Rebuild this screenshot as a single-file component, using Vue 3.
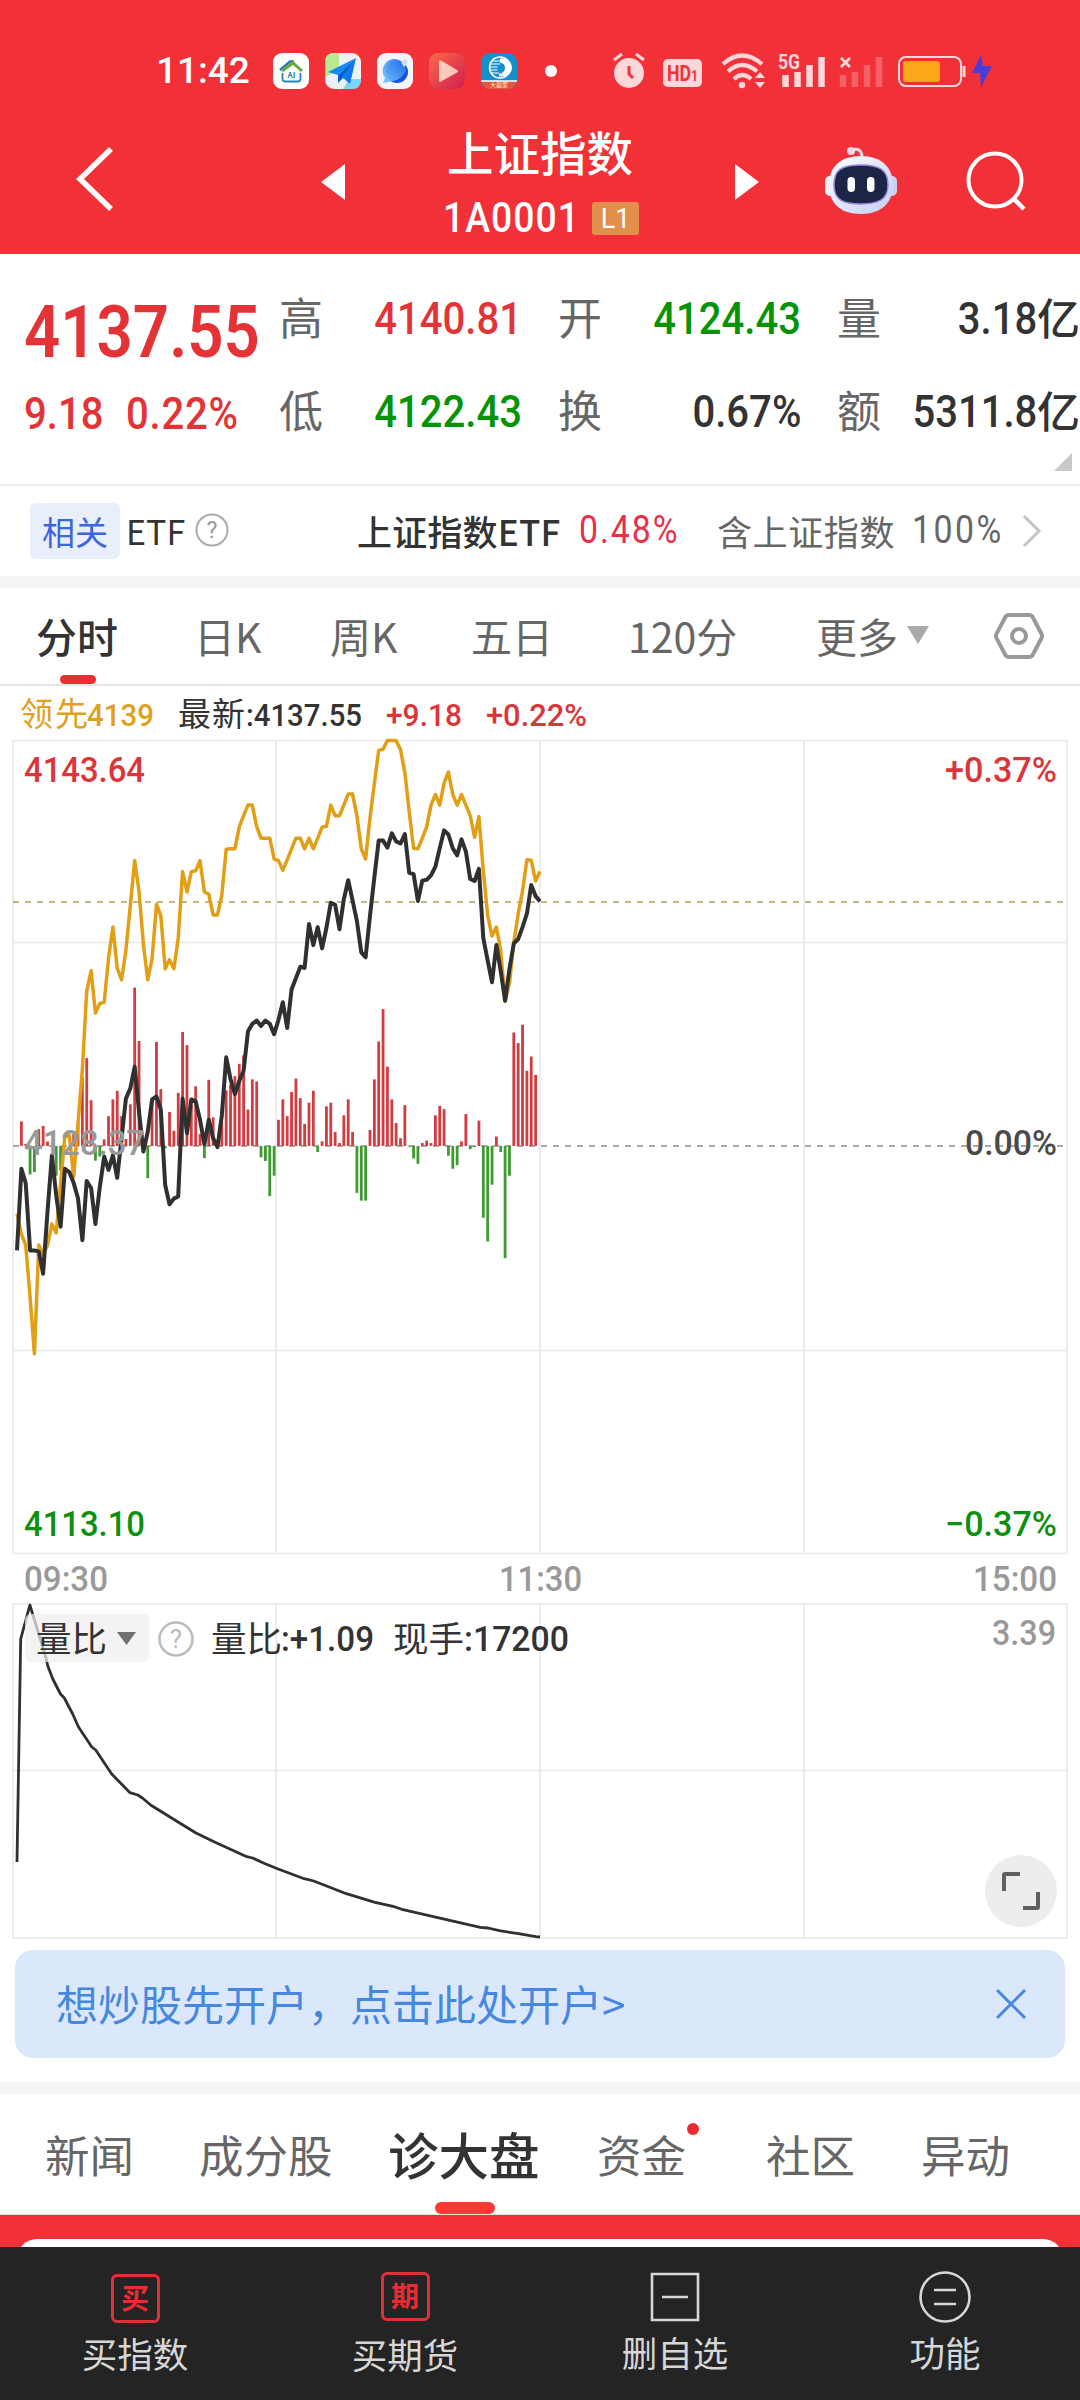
<!-- App.vue -->
<script setup>
import { ref, computed } from 'vue';

const stats = [
    { label: '高', value: '4140.81', tone: 'up' },
    { label: '开', value: '4124.43', tone: 'down' },
    { label: '量', value: '3.18', unit: '亿', tone: '' },
    { label: '低', value: '4122.43', tone: 'down' },
    { label: '换', value: '0.67%', tone: '' },
    { label: '额', value: '5311.8', unit: '亿', tone: '' }
];

const periods = ['分时', '日K', '周K', '五日', '120分', '更多'];
const activePeriod = ref('分时');

const sections = ['新闻', '成分股', '诊大盘', '资金', '社区', '异动'];
const activeSection = ref('诊大盘');

const bannerVisible = ref(true);

// one entry per minute, measured downwards from the top of the plot
const leadLevels = [
    1185, 1235, 1262, 1390, 1528, 1262, 1285, 1262, 1210, 1232, 1110, 995, 993, 1095, 965, 830, 640, 590, 693, 670,
    667, 560, 483, 583, 612, 540, 430, 320, 395, 525, 612, 560, 427, 455, 585, 563, 585, 510, 347, 397,
    347, 345, 320, 397, 402, 453, 453, 405, 292, 291, 291, 237, 210, 184, 184, 237, 265, 265, 265, 316,
    320, 344, 318, 291, 265, 265, 291, 265, 291, 265, 238, 236, 184, 210, 210, 184, 157, 157, 210, 291,
    316, 215, 130, 50, 47, 26, 26, 26, 48, 105, 200, 290, 291, 265, 237, 184, 158, 184, 130, 103,
    158, 184, 158, 184, 210, 263, 212, 345, 455, 505, 483, 540, 665, 620, 520, 450, 395, 318, 319, 370, 347
];

const priceLevels = [
    1275, 1075, 1110, 1275, 1275, 1278, 1332, 1180, 1042, 1140, 1217, 1075, 1083, 1110, 1147, 1250, 1105, 1122, 1210, 1120,
    1045, 1078, 1042, 1097, 1000, 903, 878, 825, 935, 1033, 985, 905, 898, 930, 1115, 1162, 1148, 1143, 903, 988,
    905, 910, 955, 1015, 955, 1000, 1022, 945, 802, 855, 892, 860, 835, 738, 720, 712, 725, 712, 720, 745,
    710, 667, 730, 635, 608, 580, 583, 475, 527, 483, 535, 485, 423, 428, 488, 415, 368, 418, 468, 545,
    557, 455, 360, 271, 271, 288, 253, 273, 278, 255, 350, 353, 419, 369, 367, 356, 335, 290, 246, 256,
    290, 307, 268, 298, 365, 370, 340, 510, 565, 618, 527, 590, 663, 585, 523, 512, 483, 450, 380, 407, 420
];

// buying strength above the zero line, selling strength below it
const strength = [
    0, 60, 5, -70, -64, 41, 49, 11, 0, -73, -60, 0, 0, 29, 54, 169, 215, 112, -36, -26,
    16, 73, 114, 135, 73, 17, 102, 388, 257, 5, -79, 114, 255, 139, -6, 83, 37, 130, 279, 247,
    100, 146, 29, -30, 162, 70, 5, 60, 136, 150, 171, 201, 222, 89, 163, 158, -28, -37, -123, -73,
    64, 114, 73, 132, 165, 117, 54, 106, 135, -15, 11, 97, 106, 34, 7, 75, 114, 34, -115, -134,
    -134, 39, 163, 256, 335, 194, 114, 56, 19, 100, -2, -31, -44, 7, 13, 7, 75, 98, 90, -24,
    -56, -47, 11, 78, -8, -3, 62, -176, -234, -95, 23, -15, -275, -73, 278, 252, 297, 184, 219, 174
];

const ratioLine = '17,261 20.7,38 29.9,4 46,57 47.8,65 52.8,78 60.5,93 64.3,97 72.7,113 78.5,126 91.8,146 95.7,149 111.7,173 '
    + '130,191.7 137.8,194 142.4,197 151,204.3 168.4,215 178,221 196,232 214,240.7 246.8,255.7 252.6,257 264,262.3 '
    + '277.5,267.7 304.2,277.7 313.8,280 346.3,292.7 375,301.3 394.2,305.7 401.8,308.3 480.3,326.3 488,327 499.4,329.7 '
    + '518.5,332.7 535.8,335.7 540,336';

const UNIT = 2.45;
const ZERO = 1019;

const minuteX = (i) => 17 + i * 4.358;
const toPoints = (levels) => levels.map((v, i) => `${minuteX(i).toFixed(1)},${(v / UNIT).toFixed(1)}`).join(' ');

const leadLine = computed(() => toPoints(leadLevels));
const priceLine = computed(() => toPoints(priceLevels));

const bars = computed(() => strength
    .map((v, i) => ({
        x: minuteX(i) - 1.4,
        y: (v > 0 ? ZERO - v : ZERO) / UNIT,
        height: Math.abs(v) / UNIT,
        tone: v > 0 ? 'bar-up' : 'bar-down'
    }))
    .filter((bar) => bar.height > 0));
</script>

<template>
    <div class="page">
        <header class="header">
            <div class="status">
                <span class="clock">11:42</span>
                <div class="apps">
                    <svg class="app" viewBox="0 0 36 36">
                        <rect width="36" height="36" rx="9" fill="#fff" />
                        <path d="M7 17L17 8.500 21 8.500" fill="none" stroke="#2481ad" stroke-width="2.500" />
                        <path d="M9 18L20 10 29 18" fill="none" stroke="#62ac3e" stroke-width="3" />
                        <path d="M9.500 20v6q0 2.500 3 2.500h12q3 0 3-2.500v-6" fill="none" stroke="#2189b8" stroke-width="1.800" />
                        <text x="18.500" y="25" font-size="8" font-weight="700" fill="#2481ad" text-anchor="middle">AI</text>
                    </svg>
                    <svg class="app" viewBox="0 0 36 36">
                        <rect width="36" height="36" rx="9" fill="#eef1f4" />
                        <path d="M9 0h5v17L0 24V9q0-9 9-9z" fill="#b8ea92" />
                        <path d="M24 26h12q0 10-9 10h-9z" fill="#7ad6fb" />
                        <path d="M31 5L3 19l10 3z" fill="#1488f4" />
                        <path d="M31 5L13 22v8l5-5z" fill="#0562cd" />
                        <path d="M31 5L17 24l8 7z" fill="#0a7bf0" />
                    </svg>
                    <svg class="app" viewBox="0 0 36 36">
                        <defs>
                            <linearGradient id="globe" x1="1" y1="0" x2="0" y2="1">
                                <stop offset="0" stop-color="#1a6df0" />
                                <stop offset="1" stop-color="#7cc8fb" />
                            </linearGradient>
                        </defs>
                        <rect width="36" height="36" rx="9" fill="#f3f5fa" />
                        <circle cx="20" cy="19" r="11" fill="#1554d6" />
                        <path d="M17 6a12 12 0 0 1 12 11q-3 9-13 11l-10 2 2-5A12 12 0 0 1 17 6z" fill="url(#globe)" opacity=".92" />
                        <path d="M24 9q4-4 6-2t-3 7z" fill="#c9ddfb" />
                    </svg>
                    <svg class="app" viewBox="0 0 36 36">
                        <defs>
                            <linearGradient id="player" x1="0" y1="0" x2="1" y2="1">
                                <stop offset="0" stop-color="#fb6a4a" />
                                <stop offset="1" stop-color="#d11f4e" />
                            </linearGradient>
                        </defs>
                        <rect width="36" height="36" rx="9" fill="url(#player)" />
                        <path d="M10 8.500q0-2 2-1l16 9.500q2 1.300 0 2.600l-16 9q-2 1-2-1z" fill="#fcc9bb" />
                    </svg>
                    <svg class="app" viewBox="0 0 36 36">
                        <rect width="36" height="36" rx="9" fill="#1590cc" />
                        <path d="M1 28h34q-1 8-9 8H9q-7 0-8-8z" fill="#e4573d" />
                        <path d="M0 28h36" stroke="#fff" stroke-width="1.300" />
                        <circle cx="19" cy="14.500" r="10.500" fill="none" stroke="#fff" stroke-width="1.500" />
                        <path d="M19 5.500h3a9 9 0 0 1 0 18h-4v-3h2q4-2 4-6t-5-5z" fill="#fff" />
                        <path d="M11 8h8M9 11h10M8.500 14h8M8.500 17h8M10 20h8" stroke="#fff" stroke-width="1.200" />
                        <text x="18" y="34" font-size="6" fill="#fff1b8" text-anchor="middle">大赢家</text>
                    </svg>
                </div>
                <i class="more-dot"></i>
                <svg class="signals" viewBox="0 0 382 40">
                    <g fill="#fdd7d9">
                        <circle cx="19" cy="22" r="15" />
                        <path d="M4 9l8-6M34 9l-8-6" stroke="#fdd7d9" stroke-width="3" />
                        <path d="M19 15v8l4 4" fill="none" stroke="#f13038" stroke-width="3" />
                        <rect x="53" y="8" width="39" height="28" rx="5" />
                        <text class="hd" x="57" y="29.500" textLength="31" lengthAdjust="spacingAndGlyphs">HD<tspan class="hd-sub">1</tspan></text>
                    </g>
                    <g fill="none" stroke="#fdd7d9" stroke-width="4.200">
                        <path d="M113 13q19-17 39 0" />
                        <path d="M118 20.500q14-13 29 0" />
                        <path d="M124 28q8-8 17 0" />
                    </g>
                    <circle cx="132" cy="34" r="3.200" fill="#fdd7d9" />
                    <path d="M145 27l5-6 5 6zM145 31l5 6 5-6z" fill="#fdd7d9" />
                    <text class="net" x="168" y="18" textLength="22" lengthAdjust="spacingAndGlyphs">5G</text>
                    <path d="M175.500 36V24M187.500 36V21M199.500 36V14M211.500 36V6" stroke="#fdd7d9" stroke-width="6.500" />
                    <path d="M231 7l9 9M240 7l-9 9" stroke="#fdd7d9" stroke-width="2.800" />
                    <path d="M233 36V24M245 36V21M257 36V14M269 36V6" stroke="#f55f66" stroke-width="6.500" />
                    <rect x="289" y="6" width="62" height="29" rx="7" fill="none" stroke="#fdd7d9" stroke-width="2" />
                    <rect x="293" y="10" width="37" height="21" rx="3" fill="#fca61a" />
                    <path d="M354 15v11" stroke="#fdd7d9" stroke-width="3" />
                    <path d="M371 4L362 22h8l1 14 11-21h-9z" fill="#4b3cd6" />
                </svg>
            </div>
            <div class="navbar">
                <svg class="back" viewBox="0 0 38 66">
                    <path d="M35 3L4 33l31 30" fill="none" stroke="#fff" stroke-width="5.500" />
                </svg>
                <svg class="prev" viewBox="0 0 24 36"><path d="M24 0v36L0 18z" fill="#fff" /></svg>
                <div class="title">
                    <h1>上证指数</h1>
                    <div class="code">
                        <span class="code-text">1A0001</span>
                        <span class="level">L1</span>
                    </div>
                </div>
                <svg class="next" viewBox="0 0 24 36"><path d="M0 0v36l24-18z" fill="#fff" /></svg>
                <svg class="robot" viewBox="0 0 72 68">
                    <defs>
                        <linearGradient id="shell" x1="0" y1="0" x2="1" y2="1">
                            <stop offset="0" stop-color="#ffffff" />
                            <stop offset="1" stop-color="#c3cdf3" />
                        </linearGradient>
                    </defs>
                    <path d="M27 4q10-3 10 8" fill="none" stroke="#f6dfe8" stroke-width="3" />
                    <circle cx="26" cy="5" r="4" fill="#f4d9e2" />
                    <rect x="0" y="30" width="12" height="20" rx="5" fill="#eef0fb" />
                    <rect x="60" y="30" width="12" height="20" rx="5" fill="#c9d2f4" />
                    <path d="M36 10c21 0 32 12 32 29S57 68 36 68 4 57 4 39s11-29 32-29z" fill="url(#shell)" />
                    <path d="M36 19c20 0 27 6 27 20S54 58 36 58 9 54 9 39s7-20 27-20z" fill="#1d2546" stroke="#9a86e0" stroke-width="1.500" />
                    <rect x="22.500" y="31" width="7.500" height="15" rx="3.700" fill="#fff" />
                    <rect x="42" y="31" width="7.500" height="15" rx="3.700" fill="#fff" />
                </svg>
                <svg class="search" viewBox="0 0 62 64">
                    <circle cx="29" cy="31" r="26.500" fill="none" stroke="#fff" stroke-width="4" />
                    <path d="M47 49l11 11" stroke="#fff" stroke-width="4.500" />
                </svg>
            </div>
        </header>

        <section class="quote">
            <div class="price up">
                <div class="last din">4137.55</div>
                <div class="change"><span class="din">9.18</span><span class="din">0.22%</span></div>
            </div>
            <div class="stats">
                <div v-for="item in stats" :key="item.label" class="stat">
                    <span class="stat-label">{{ item.label }}</span>
                    <span class="stat-value" :class="item.tone">
                        <span class="din">{{ item.value }}</span><span v-if="item.unit" class="unit">{{ item.unit }}</span>
                    </span>
                </div>
            </div>
            <i class="corner"></i>
        </section>

        <section class="related">
            <span class="tag">相关</span>
            <span class="etf">ETF</span>
            <svg class="help" viewBox="0 0 34 34">
                <circle cx="17" cy="17" r="15.500" />
                <text x="17" y="25">?</text>
            </svg>
            <span class="fund">上证指数ETF</span>
            <span class="fund-rate din">0.48%</span>
            <span class="contains">含上证指数</span>
            <span class="contains-rate din">100%</span>
            <svg class="arrow" viewBox="0 0 20 34"><path d="M2 2l15 15L2 32" /></svg>
        </section>

        <nav class="periods">
            <div v-for="name in periods" :key="name" class="period" :class="{ active: name === activePeriod }" @click="activePeriod = name">
                {{ name }}<svg v-if="name === '更多'" class="caret" viewBox="0 0 22 18"><path d="M0 0h22L11 18z" /></svg>
            </div>
            <svg class="gear" viewBox="0 0 50 48">
                <path d="M14.500 3h21q2 0 3 1.800l9 17q1 2.200 0 4.400l-9 17q-1 1.800-3 1.800h-21q-2 0-3-1.800l-9-17q-1-2.200 0-4.400l9-17q1-1.800 3-1.800z" />
                <circle cx="25" cy="24" r="7" />
            </svg>
        </nav>

        <section class="charts">
            <svg class="legend" width="1080" height="44">
                <text class="cjk gold" x="20" y="40" textLength="68">领先</text>
                <text class="lead gold" x="87" y="40" textLength="67" lengthAdjust="spacingAndGlyphs">4139</text>
                <text class="cjk dark" x="178" y="40" textLength="67">最新</text>
                <text class="lead dark" x="246" y="40" textLength="116" lengthAdjust="spacingAndGlyphs">:4137.55</text>
                <text class="lead red" x="386" y="40" textLength="76" lengthAdjust="spacingAndGlyphs">+9.18</text>
                <text class="lead red" x="486" y="40" textLength="101" lengthAdjust="spacingAndGlyphs">+0.22%</text>
            </svg>
            <svg class="plot" width="1080" height="873">
                <path class="grid" d="M13 10.500H1067M13 212.500H1067M13 620.500H1067M13 823.500H1067M13 10V823M276 10V823M540 10V823M804 10V823M1067 10V823" />
                <path class="dash gold-dash" d="M13 172H1063" />
                <path class="dash" d="M13 416H1063" />
                <rect v-for="(bar, i) in bars" :key="i" :class="bar.tone" :x="bar.x" :y="bar.y" width="2.800" :height="bar.height" />
                <polyline class="line lead-line" :points="leadLine" />
                <polyline class="line" :points="priceLine" />
                <text class="axis red" x="24" y="52" textLength="121" lengthAdjust="spacingAndGlyphs">4143.64</text>
                <text class="axis grey" x="24" y="425" textLength="121" lengthAdjust="spacingAndGlyphs">4128.37</text>
                <text class="axis green" x="24" y="806" textLength="121" lengthAdjust="spacingAndGlyphs">4113.10</text>
                <text class="axis red" x="945" y="52" textLength="112" lengthAdjust="spacingAndGlyphs">+0.37%</text>
                <text class="axis mid" x="965" y="425" textLength="92" lengthAdjust="spacingAndGlyphs">0.00%</text>
                <text class="axis green" x="945" y="806" textLength="112" lengthAdjust="spacingAndGlyphs">−0.37%</text>
                <text class="axis time" x="24" y="861" textLength="84" lengthAdjust="spacingAndGlyphs">09:30</text>
                <text class="axis time" x="499" y="861" textLength="83" lengthAdjust="spacingAndGlyphs">11:30</text>
                <text class="axis time" x="973" y="861" textLength="84" lengthAdjust="spacingAndGlyphs">15:00</text>
            </svg>
            <div class="ratio">
                <svg width="1080" height="339">
                    <path class="grid" d="M13 1H1067M13 167.500H1067M13 335H1067M13 0V335M276 0V335M540 0V335M804 0V335M1067 0V335" />
                    <polyline class="line ratio-line" :points="ratioLine" transform="translate(0 -2)" />
                    <rect x="25" y="11" width="124" height="48" rx="6" fill="#efefef" fill-opacity=".72" />
                    <text class="cjk big dark" x="36" y="49" textLength="71">量比</text>
                    <path d="M117 29h19l-9.500 13z" fill="#707070" />
                    <circle cx="176" cy="36" r="16.500" fill="none" stroke="#bbb" stroke-width="2.500" />
                    <text class="mark" x="176" y="45">?</text>
                    <text class="cjk big dark" x="211" y="49" textLength="71">量比</text>
                    <text class="axis thin dark" x="281" y="48" textLength="93" lengthAdjust="spacingAndGlyphs">:+1.09</text>
                    <text class="cjk big dark" x="393" y="49" textLength="71">现手</text>
                    <text class="axis thin dark" x="464" y="48" textLength="105" lengthAdjust="spacingAndGlyphs">:17200</text>
                    <text class="axis time" x="992" y="42" textLength="64" lengthAdjust="spacingAndGlyphs">3.39</text>
                </svg>
                <button class="expand">
                    <svg viewBox="0 0 38 38"><path d="M2 19V3q0-1 1-1h15M36 20v15q0 1-1 1H21" /></svg>
                </button>
            </div>
        </section>

        <div v-if="bannerVisible" class="banner">
            <span>想炒股先开户，点击此处开户&gt;</span>
            <svg class="close" viewBox="0 0 30 30" @click="bannerVisible = false"><path d="M1 1l28 28M29 1L1 29" /></svg>
        </div>

        <nav class="sections">
            <div v-for="name in sections" :key="name" class="section" :class="{ current: name === activeSection }" @click="activeSection = name">
                {{ name }}<i v-if="name === '资金'" class="badge"></i>
            </div>
        </nav>

        <div class="panel"><div class="card"></div></div>

        <footer class="toolbar">
            <div class="tool">
                <span class="glyph first">买</span>
                <span>买指数</span>
            </div>
            <div class="tool">
                <span class="glyph">期</span>
                <span>买期货</span>
            </div>
            <div class="tool">
                <svg class="tool-icon" viewBox="0 0 52 52"><path d="M3 3h46v46H3zM13 26h26" /></svg>
                <span>删自选</span>
            </div>
            <div class="tool">
                <svg class="tool-icon" viewBox="0 0 52 52"><circle cx="26" cy="26" r="24.500" /><path d="M15 19h22M15 33h22" /></svg>
                <span>功能</span>
            </div>
        </footer>
    </div>
</template>

<style>
body {
    margin: 0;
    background: #fff;
}
</style>

<style scoped>
.page {
    width: 1080px;
    height: 2400px;
    overflow: hidden;
    display: flex;
    flex-direction: column;
    background: #fff;
    color: #333;
    font-family: "Noto Sans CJK SC", sans-serif;
}

.page > * {
    flex-shrink: 0;
    box-sizing: border-box;
}

.page svg {
    display: block;
    overflow: visible;
}

.din {
    display: inline-block;
    font-family: Roboto, sans-serif;
    font-weight: 500;
    transform: scaleX(0.89);
    transform-origin: left center;
}

.up {
    color: #e33336;
}

.down {
    color: #069306;
}

/* header */
.header {
    height: 254px;
    padding-top: 50px;
    background: #f13038;
    color: #fff;
}

.status {
    display: flex;
    align-items: center;
    height: 42px;
    padding-left: 156px;
}

.clock {
    width: 117px;
    font: 500 37px/42px Roboto, sans-serif;
}

.apps {
    display: flex;
    gap: 16px;
}

.app {
    width: 36px;
    height: 36px;
}

.more-dot {
    width: 12px;
    height: 12px;
    margin-left: 28px;
    border-radius: 50%;
    background: #fff;
}

.signals {
    width: 382px;
    height: 40px;
    margin-left: 53px;
}

.hd {
    font: 700 22px Roboto, sans-serif;
    fill: #f13038;
}

.hd-sub {
    font-size: 15px;
}

.net {
    font: 700 20px Roboto, sans-serif;
    fill: #fdd7d9;
}

.navbar {
    display: flex;
    height: 162px;
    padding-left: 76px;
}

.back {
    width: 38px;
    height: 66px;
    margin-top: 54px;
}

.prev,
.next {
    width: 24px;
    height: 36px;
    margin-top: 72px;
}

.prev {
    margin-left: 207px;
}

.title {
    width: 390px;
    text-align: center;
}

h1 {
    margin: 31px 0 0;
    font-size: 46.500px;
    font-weight: 500;
    line-height: 56px;
}

.code {
    display: flex;
    align-items: center;
    height: 32px;
    margin-top: 23px;
    padding-left: 98px;
}

.code-text {
    width: 149px;
    text-align: left;
    font: 500 42px/32px Roboto, sans-serif;
    letter-spacing: 1.1px;
    transform: scaleX(0.89);
    transform-origin: left center;
}

.level {
    width: 47px;
    height: 33px;
    border-radius: 3px;
    background: #e0904a;
    font: 400 27px/34px Roboto, sans-serif;
}

.robot {
    width: 72px;
    height: 68px;
    margin: 54px 0 0 66px;
}

.search {
    width: 62px;
    height: 64px;
    margin: 57px 0 0 69px;
}

/* quote */
.quote {
    position: relative;
    display: flex;
    height: 232px;
    border-bottom: 2px solid #ececec;
}

.price {
    width: 279px;
    padding: 40px 0 0 24px;
    box-sizing: border-box;
}

.last {
    font-size: 73px;
    font-weight: 600;
    line-height: 76px;
    transform: scaleX(0.87);
}

.change {
    display: flex;
    margin-top: 21px;
    font-size: 45px;
    line-height: 46px;
}

.change .din {
    width: 102px;
}

.change .din + .din {
    letter-spacing: 0.9px;
}

.stats {
    display: grid;
    grid-template-columns: repeat(3, 241px);
    grid-auto-rows: 93px;
    column-gap: 38px;
    padding-top: 17px;
}

.stat {
    display: flex;
    align-items: center;
    justify-content: space-between;
    height: 93px;
}

.stat-label {
    color: #666;
    font-size: 44px;
    line-height: 60px;
    margin-top: -4px;
}

.stat-value {
    display: flex;
    align-items: center;
    font-size: 45px;
    line-height: 60px;
    margin: 2px -2px 0 0;
}

.stat-value .din {
    transform-origin: right center;
}

.unit {
    font-size: 43px;
    font-weight: 500;
    margin-top: -6px;
}

.corner {
    position: absolute;
    right: 8px;
    bottom: 13px;
    width: 18px;
    height: 18px;
    background: #c9c9c9;
    clip-path: polygon(100% 0, 100% 100%, 0 100%);
}

/* related fund row */
.related {
    display: flex;
    align-items: center;
    height: 90px;
    padding-left: 30px;
    font-size: 35px;
    line-height: 56px;
    white-space: nowrap;
}

.tag {
    width: 90px;
    height: 56px;
    border-radius: 6px;
    background: #e9eefb;
    color: #3c66dc;
    font-size: 33px;
    line-height: 56px;
    text-align: center;
}

.etf {
    width: 69px;
    padding-left: 6px;
    font-size: 34px;
}

.help {
    width: 34px;
    height: 34px;
    margin-top: -2px;
}

.help circle {
    fill: none;
    stroke: #aaa;
    stroke-width: 2;
}

.help text {
    fill: #999;
    font: 400 23px Roboto, sans-serif;
    text-anchor: middle;
}

.fund {
    width: 222px;
    margin-left: 128px;
    font-weight: 500;
    letter-spacing: 0.2px;
}

.fund-rate {
    width: 138px;
    margin-top: -2px;
    font-size: 38px;
    font-weight: 400;
    letter-spacing: 2.2px;
    color: #e8304a;
}

.contains {
    width: 195px;
    color: #666;
    letter-spacing: 0.6px;
}

.contains-rate {
    width: 110px;
    margin-top: -2px;
    font-size: 38px;
    font-weight: 400;
    letter-spacing: 2.8px;
    color: #666;
}

.arrow {
    width: 20px;
    height: 34px;
}

.arrow path {
    fill: none;
    stroke: #c4c4c4;
    stroke-width: 3;
}

/* period tabs */
.periods {
    display: grid;
    grid-template-columns: 158px 136px 141px 157px 188px 178px auto;
    height: 110px;
    padding-left: 36px;
    border-top: 12px solid #f4f4f4;
    border-bottom: 2px solid #e6e6e6;
}

.period {
    position: relative;
    display: flex;
    align-items: center;
    height: 93px;
    color: #666;
    font-size: 41px;
}

.period.active {
    color: #333;
    font-weight: 500;
}

.period.active::after {
    content: '';
    position: absolute;
    left: 24px;
    bottom: -3px;
    width: 36px;
    height: 9px;
    border-radius: 5px;
    background: #e92f31;
}

.caret {
    width: 22px;
    height: 18px;
    margin-left: 9px;
    fill: #aaa;
}

.gear {
    width: 50px;
    height: 48px;
    margin-top: 24px;
    fill: none;
    stroke: #999;
    stroke-width: 4;
}

/* charts */
.grid {
    fill: none;
    stroke: #e9e9e9;
    stroke-width: 1.7;
}

.dash {
    stroke: #8c8c8c;
    stroke-width: 1.6;
    stroke-dasharray: 6 6;
}

.gold-dash {
    stroke: #b3a057;
}

.bar-up {
    fill: #d23c40;
}

.bar-down {
    fill: #3f9a31;
}

.line {
    fill: none;
    stroke: #303030;
    stroke-width: 4;
    stroke-linejoin: round;
}

.lead-line {
    stroke: #e29e14;
    stroke-width: 3.5;
}

.ratio-line {
    stroke-width: 2.8;
}

.axis {
    font: 500 34.5px Roboto, sans-serif;
}

.lead {
    font: 500 32px Roboto, sans-serif;
}

.cjk {
    font: 400 33px "Noto Sans CJK SC", sans-serif;
}

.cjk.big {
    font-size: 35.5px;
}

.mark {
    fill: #bbb;
    font: 400 26px Roboto, sans-serif;
    text-anchor: middle;
}

.gold {
    fill: #e0a020;
}

.dark {
    fill: #333;
}

.red {
    fill: #dc3539;
}

.green {
    fill: #0d8f10;
}

.mid {
    fill: #4a4a4a;
}

.grey,
.time {
    fill: #999;
}

.ratio {
    position: relative;
    height: 339px;
}

.expand {
    position: absolute;
    right: 23px;
    bottom: 15px;
    display: flex;
    align-items: center;
    justify-content: center;
    width: 72px;
    height: 72px;
    padding: 0;
    border: 0;
    border-radius: 50%;
    background: #ededed;
}

.expand svg {
    width: 38px;
    height: 38px;
    fill: none;
    stroke: #606060;
    stroke-width: 4;
}

/* account banner */
.banner {
    display: flex;
    align-items: center;
    justify-content: space-between;
    height: 108px;
    margin: 8px 15px 24px;
    padding: 0 39px 0 41px;
    border-radius: 18px;
    background: #dbe8fb;
    color: #4688e0;
    font-size: 42px;
}

.banner span {
    margin-top: -3px;
}

.close {
    width: 30px;
    height: 30px;
    fill: none;
    stroke: #4688e0;
    stroke-width: 3;
}

/* section tabs */
.sections {
    display: grid;
    grid-template-columns: 154px 189px 209px 169px 155px auto;
    height: 133px;
    padding-left: 45px;
    border-top: 12px solid #f4f4f4;
    border-bottom: 1px solid #ddd;
}

.section {
    position: relative;
    display: flex;
    align-items: center;
    justify-self: start;
    height: 118px;
    color: #666;
    font-size: 44.5px;
    white-space: nowrap;
}

.section.current {
    color: #333;
    font-size: 50.5px;
    font-weight: 500;
}

.section.current::after {
    content: '';
    position: absolute;
    left: 47px;
    bottom: -2px;
    width: 60px;
    height: 12px;
    border-radius: 6px;
    background: #fa3a34;
}

.badge {
    position: absolute;
    top: 29px;
    right: -13px;
    width: 12px;
    height: 12px;
    border-radius: 50%;
    background: #e92c32;
}

.panel {
    height: 32px;
    padding: 24px 17px 0;
    background: #f13038;
    overflow: hidden;
}

.card {
    height: 60px;
    border-radius: 20px;
    background: #fff;
}

/* bottom toolbar */
.toolbar {
    display: grid;
    grid-template-columns: repeat(4, 1fr);
    height: 153px;
    padding-top: 25px;
    background: #242424;
    color: #d6d6d6;
    font-size: 35.5px;
    line-height: 52px;
}

.tool {
    display: flex;
    flex-direction: column;
    align-items: center;
    gap: 5px;
}

.glyph {
    width: 43px;
    height: 43px;
    margin: 0 0 2px;
    border: 3px solid #e23038;
    border-radius: 6px;
    color: #ec2a34;
    font-size: 28px;
    font-weight: 700;
    line-height: 41px;
    text-align: center;
}

.glyph.first {
    margin: 2px 0 -1px;
}

.tool-icon {
    width: 52px;
    height: 52px;
    margin: -1px 0 -2px;
    fill: none;
    stroke: #d6d6d6;
    stroke-width: 2.6;
}
</style>
